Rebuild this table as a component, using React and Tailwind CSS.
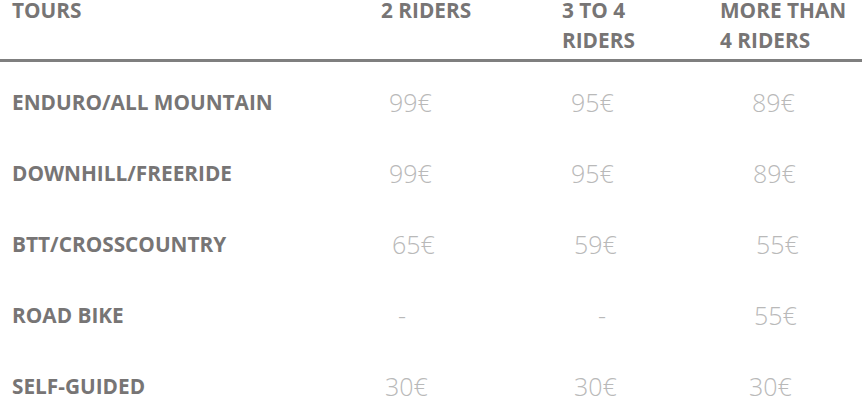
import React from "react";

const rows = [
  { name: "ENDURO/ALL MOUNTAIN", p: [["99€", "pl-[8px]"], ["95€", "pl-[11px]"], ["89€", "pl-[32px]"]] },
  { name: "DOWNHILL/FREERIDE", p: [["99€", "pl-[8px]"], ["95€", "pl-[11px]"], ["89€", "pl-[33px]"]] },
  { name: "BTT/CROSSCOUNTRY", p: [["65€", "pl-[11px]"], ["59€", "pl-[14px]"], ["55€", "pl-[36px]"]] },
  { name: "ROAD BIKE", p: [["-", "pl-[17px]"], ["-", "pl-[38px]"], ["55€", "pl-[34px]"]] },
  { name: "SELF-GUIDED", p: [["30€", "pl-[4px]"], ["30€", "pl-[14px]"], ["30€", "pl-[29px]"]] },
];

export default function App() {
  return (
    <div className="w-[862px] h-[400px] overflow-hidden bg-white" style={{ fontFamily: '"Open Sans", sans-serif' }}>
      <div className="grid grid-cols-[381px_179px_160px_1fr] border-b-[3px] border-[#7f7f7f] h-[62px] text-[20.8px] font-bold leading-[20px] text-[#777575]">
        <div className="pl-[12px]">TOURS</div>
        <div>2 RIDERS</div>
        <div className="pl-[2px]">
          <div>3 TO 4</div>
          <div className="mt-[10px]">RIDERS</div>
        </div>
        <div>
          <div>MORE THAN</div>
          <div className="mt-[10px]">4 RIDERS</div>
        </div>
      </div>
      <div className="mt-[5px]">
        {rows.map((r) => (
          <div key={r.name} className="grid h-[71px] grid-cols-[381px_179px_160px_1fr] leading-[71px]">
            <div className="pl-[12px] text-[20.8px] font-bold text-[#777575]">{r.name}</div>
            {r.p.map(([v, c], i) => (
              <div key={i} className={`${c} text-[25px] font-light text-[#b9b9b9]`}>{v}</div>
            ))}
          </div>
        ))}
      </div>
    </div>
  );
}
